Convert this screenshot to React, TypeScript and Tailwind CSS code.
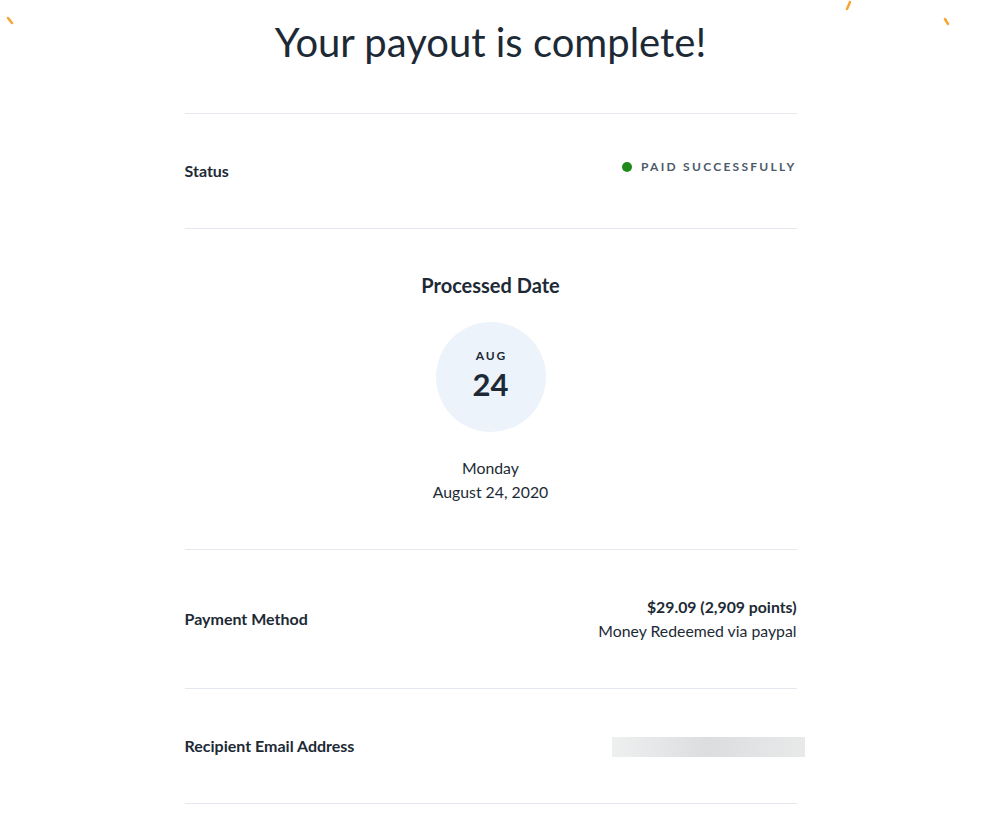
export default function App() {
  return (
    <div className="relative min-h-[834px] w-[981px] bg-white text-[#1d2a35]" style={{ fontFamily: "Lato, 'Open Sans', sans-serif" }}>
      {/* confetti */}
      <svg className="absolute left-0 top-0 h-[40px] w-[981px]" viewBox="0 0 981 40" aria-hidden="true">
        <line x1="8" y1="18" x2="12" y2="23" stroke="#f7a531" strokeWidth="2.5" strokeLinecap="round" />
        <line x1="850" y1="2" x2="847" y2="9" stroke="#f7a531" strokeWidth="2.5" strokeLinecap="round" />
        <line x1="945" y1="19" x2="948" y2="24" stroke="#f7a531" strokeWidth="2.5" strokeLinecap="round" />
      </svg>

      <div className="mx-auto w-[612px]">
        <h1 className="pt-[18px] pb-[47px] text-center text-[40px] leading-[48px] font-normal text-[#1d2a35]">
          Your payout is complete!
        </h1>

        <div className="border-t border-[#e3e9ef]">
          <div className="flex h-[114px] items-center justify-between">
            <span className="text-[16px] font-bold">Status</span>
            <span className="-mt-[8px] flex items-center gap-[9px] text-[12px] font-bold tracking-[0.19em] text-[#4d5a68]">
              <span className="h-[10px] w-[10px] rounded-full bg-[#1f8a1a]" />
              PAID SUCCESSFULLY
            </span>
          </div>
        </div>

        <div className="border-t border-[#e3e9ef]">
          <div className="flex h-[320px] flex-col items-center pt-[43px]">
            <h2 className="text-[20px] font-bold leading-[26px]">Processed Date</h2>
            <div className="mt-[24px] flex h-[110px] w-[110px] flex-col items-center justify-center rounded-full bg-[#edf3fa]">
              <span className="-mt-[4px] text-[12px] font-bold leading-[14px] tracking-[0.16em] pl-[2px]">AUG</span>
              <span className="mt-[4px] text-[31px] font-bold leading-[34px]">24</span>
            </div>
            <div className="mt-[24px] text-center text-[15.8px] leading-[24px]">
              <div>Monday</div>
              <div>August 24, 2020</div>
            </div>
          </div>
        </div>

        <div className="border-t border-[#e3e9ef]">
          <div className="flex h-[138px] items-center justify-between">
            <span className="text-[16px] font-bold">Payment Method</span>
            <div className="text-right text-[15.8px] leading-[24px]">
              <div className="font-bold">$29.09 (2,909 points)</div>
              <div>Money Redeemed via paypal</div>
            </div>
          </div>
        </div>

        <div className="border-t border-[#e3e9ef]">
          <div className="flex h-[114px] items-center justify-between">
            <span className="text-[16px] font-bold">Recipient Email Address</span>
            <div className="-mr-[8px] mt-[2px] h-[20px] w-[193px] bg-gradient-to-r from-[#eef0f0] via-[#dcdddf] to-[#e8eaea]" />
          </div>
        </div>

        <div className="border-t border-[#e3e9ef]" />
      </div>
    </div>
  );
}
